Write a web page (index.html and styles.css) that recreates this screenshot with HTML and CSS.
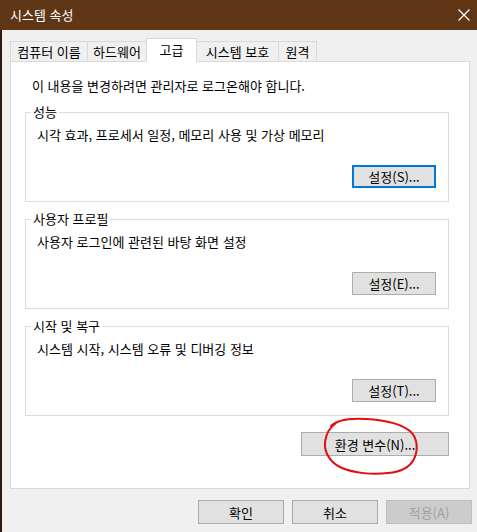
FILE: index.html
```html
<!DOCTYPE html>
<html lang="ko">
<head>
  <meta charset="UTF-8" />
  <meta name="viewport" content="width=device-width, initial-scale=1.0" />
  <title>시스템 속성</title>
  <link rel="stylesheet" href="styles.css">
</head>
<body>
  <div id="titlebar">
    <span class="title">시스템 속성</span>
    <svg class="close" width="12" height="12" viewBox="0 0 12 12">
      <path d="M0.5 0.5 L11.5 11.5 M11.5 0.5 L0.5 11.5" stroke="#fff" stroke-width="1.2" fill="none" />
    </svg>
  </div>

  <div id="window">
    <div class="tabs">
      <div class="tab" style="width:78px">컴퓨터 이름</div>
      <div class="tab" style="width:60px">하드웨어</div>
      <div class="tab active" style="width:51px">고급</div>
      <div class="tab" style="width:83px">시스템 보호</div>
      <div class="tab" style="width:39px">원격</div>
    </div>

    <div class="panel">
      <div class="note">이 내용을 변경하려면 관리자로 로그온해야 합니다.</div>

      <fieldset class="group first">
        <legend>성능</legend>
        <div class="group-body">
          <div class="desc">시각 효과, 프로세서 일정, 메모리 사용 및 가상 메모리</div>
          <div class="btn-row"><button class="btn default">설정(S)...</button></div>
        </div>
      </fieldset>

      <fieldset class="group">
        <legend>사용자 프로필</legend>
        <div class="group-body">
          <div class="desc">사용자 로그인에 관련된 바탕 화면 설정</div>
          <div class="btn-row"><button class="btn">설정(E)...</button></div>
        </div>
      </fieldset>

      <fieldset class="group">
        <legend>시작 및 복구</legend>
        <div class="group-body">
          <div class="desc">시스템 시작, 시스템 오류 및 디버깅 정보</div>
          <div class="btn-row"><button class="btn">설정(T)...</button></div>
        </div>
      </fieldset>

      <div class="btn-row env-row"><button class="btn env">환경 변수(N)...</button></div>
    </div>

    <div class="dialog-buttons">
      <button class="btn wide">확인</button>
      <button class="btn wide">취소</button>
      <button class="btn wide disabled">적용(A)</button>
    </div>
  </div>

  <!-- 빨간 펜 표시 -->
  <svg class="annot" width="477" height="532" viewBox="0 0 477 532">
    <path d="M331 426 C338 419 352 418 366 419 C384 420 402 424 411 432 C418 439 418 451 414 459 C410 467 400 472 388 473 C372 475 354 473 342 468 C330 463 324 452 325 442 C326 434 329 428 336 423"
          stroke="#e01010" stroke-width="2" fill="none" stroke-linecap="round" />
  </svg>
</body>
</html>
```

FILE: styles.css
```css
body {
  margin: 0;
  background: #f0f0f0;
  font-family: "Noto Sans CJK KR", sans-serif;
  font-size: 13px;
  color: #000;
  position: relative;
  height: 532px;
  overflow: hidden;
}
#titlebar {
  height: 30px;
  background: #5f3716;
  color: #fff;
  display: flex;
  align-items: center;
  justify-content: space-between;
  padding: 0 7px 0 10px;
}
#titlebar .title {
  line-height: 16px;
}
#window {
  border-left: 2px solid #2a1c12;
  padding: 8px 7px 0 8px;
  height: 494px;
}
.tabs {
  display: flex;
  align-items: flex-end;
  height: 23px;
  position: relative;
  z-index: 1;
}
.tab {
  box-sizing: border-box;
  height: 20px;
  line-height: 19px;
  text-align: center;
  background: #f0f0f0;
  border: 1px solid #d9d9d9;
  border-bottom: none;
  margin-right: -1px;
  white-space: nowrap;
}
.tab.active {
  height: 24px;
  line-height: 21px;
  background: #fff;
  margin-bottom: -1px;
  position: relative;
  z-index: 2;
}
.panel {
  background: #fff;
  border: 1px solid #d9d9d9;
  padding: 16px 20px 32px 14px;
}
.note {
  line-height: 16px;
  margin-left: 7px;
}
.group {
  margin: 9px 0 0;
  padding: 0;
  border: 1px solid #dcdcdc;
  min-width: 0;
}
.group.first {
  margin-top: 10px;
}
.group legend {
  margin-left: 5px;
  padding: 0 2px;
  line-height: 16px;
}
.group-body {
  padding: 7px 12px 13px 11px;
}
.desc {
  line-height: 16px;
}
.btn-row {
  display: flex;
  justify-content: flex-end;
  margin-top: 22px;
}
.btn {
  font-family: inherit;
  font-size: 13px;
  color: #000;
  box-sizing: border-box;
  width: 84px;
  height: 23px;
  padding: 0;
  background: #e1e1e1;
  border: 1px solid #adadad;
}
.btn.default {
  border: 2px solid #0078d7;
}
.env-row {
  margin-top: 16px;
}
.btn.env {
  width: 148px;
  height: 24px;
}
.dialog-buttons {
  display: flex;
  justify-content: flex-end;
  gap: 8px;
  margin: 11px -2px 0 0;
}
.btn.wide {
  width: 86px;
  height: 24px;
}
.btn.disabled {
  background: #cccccc;
  border-color: #bfbfbf;
  color: #a0a0a0;
}
.annot {
  position: absolute;
  left: 0;
  top: 0;
  pointer-events: none;
}
```
